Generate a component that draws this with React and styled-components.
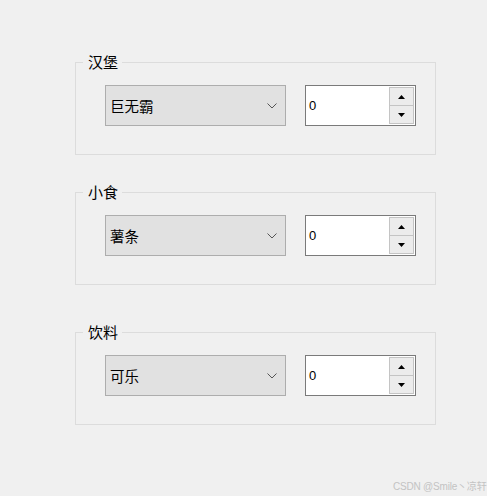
import React from "react";
import styled, { createGlobalStyle } from "styled-components";

const GlobalStyle = createGlobalStyle`
  html, body {
    margin: 0;
    padding: 0;
    background: #f0f0f0;
  }
  body {
    font-family: "Noto Sans CJK SC", "Liberation Sans", sans-serif;
  }
`;

const groups = [
  { title: "汉堡", item: "巨无霸", gap: 28 },
  { title: "小食", item: "薯条", gap: 38 },
  { title: "饮料", item: "可乐", gap: 0 },
];

const App = () => {
  return (
    <>
      <GlobalStyle />
      <Page>
        {groups.map((g) => (
          <Group key={g.title} $gap={g.gap}>
            <Title>{g.title}</Title>
            <Row>
              <Combo>
                <ComboText>{g.item}</ComboText>
                <svg width="10" height="6" viewBox="0 0 10 6">
                  <path d="M0.5 0.5 L5 5 L9.5 0.5" fill="none" stroke="#555" strokeWidth="1" />
                </svg>
              </Combo>
              <Spinner>
                <SpinValue>0</SpinValue>
                <SpinButtons>
                  <SpinBtn>
                    <svg width="7" height="4" viewBox="0 0 7 4">
                      <path d="M3.5 0 L7 4 L0 4 Z" fill="#000" />
                    </svg>
                  </SpinBtn>
                  <SpinBtn>
                    <svg width="7" height="4" viewBox="0 0 7 4">
                      <path d="M0 0 L7 0 L3.5 4 Z" fill="#000" />
                    </svg>
                  </SpinBtn>
                </SpinButtons>
              </Spinner>
            </Row>
          </Group>
        ))}
      </Page>
      <Watermark>CSDN @Smile丶凉轩</Watermark>
    </>
  );
};

export default App;

const Page = styled.div`
  width: 487px;
  height: 496px;
  box-sizing: border-box;
  padding: 53px 0 0 75px;
  display: flex;
  flex-direction: column;
`;

const Group = styled.fieldset`
  width: 361px;
  box-sizing: border-box;
  margin: 0 0 ${(p) => p.$gap}px 0;
  padding: 0;
  border: 1px solid #dcdcdc;
  min-inline-size: 0;
`;

const Title = styled.legend`
  margin-left: 7px;
  padding: 0 4px 0 5px;
  font-size: 15px;
  line-height: 18px;
  color: #000;
`;

const Row = styled.div`
  display: flex;
  align-items: center;
  gap: 19px;
  padding: 14px 0 28px 29px;
`;

const Combo = styled.div`
  flex-shrink: 0;
  width: 181px;
  height: 41px;
  box-sizing: border-box;
  display: flex;
  align-items: center;
  justify-content: space-between;
  padding: 0 8px 0 4px;
  background: #e1e1e1;
  border: 1px solid #adadad;
`;

const ComboText = styled.span`
  font-size: 14.5px;
  color: #000;
`;

const Spinner = styled.div`
  flex-shrink: 0;
  width: 111px;
  height: 41px;
  box-sizing: border-box;
  display: flex;
  align-items: center;
  justify-content: space-between;
  padding: 1px 1px 1px 3px;
  background: #fff;
  border: 1px solid #7a7a7a;
`;

const SpinValue = styled.span`
  font-family: "Liberation Sans", sans-serif;
  font-size: 13px;
  color: #000;
`;

const SpinButtons = styled.div`
  display: flex;
  flex-direction: column;
  height: 100%;
  width: 25px;
`;

const SpinBtn = styled.div`
  flex: 1;
  display: flex;
  align-items: center;
  justify-content: center;
  background: #ececec;
  border: 1px solid #c4c4c4;
  & + & {
    border-top: none;
  }
`;

const Watermark = styled.div`
  position: absolute;
  left: 393px;
  top: 478px;
  white-space: nowrap;
  font-size: 10px;
  letter-spacing: -0.2px;
  color: #c3c3c3;
  font-family: "Liberation Sans", "Noto Sans CJK SC", sans-serif;
`;
